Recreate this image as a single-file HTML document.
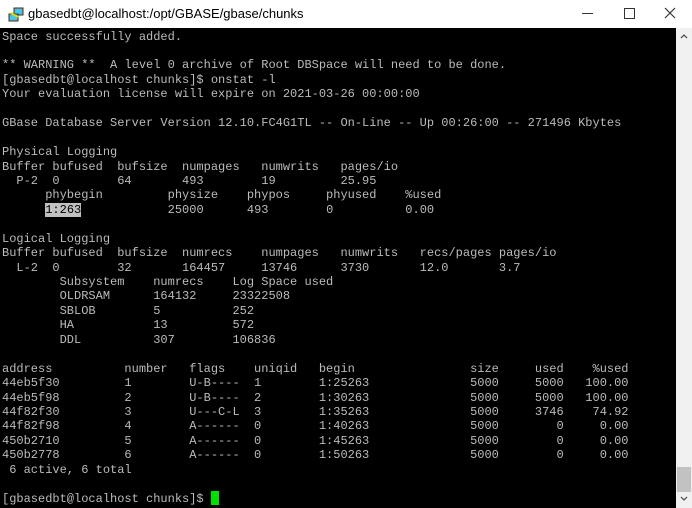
<!DOCTYPE html>
<html><head><meta charset="utf-8">
<style>
html,body{margin:0;padding:0;width:692px;height:508px;overflow:hidden;background:#fff;}
.title{position:absolute;left:0;top:0;width:692px;height:28px;background:#fff;}
.ttext{position:absolute;left:28px;top:6px;font:13px "Liberation Sans",sans-serif;color:#000;}
.term{position:absolute;left:0;top:28px;width:676px;height:480px;background:#000;}
.sb{position:absolute;left:676px;top:28px;width:16px;height:480px;background:#f0f0f0;}
pre{position:absolute;left:2px;top:29.6px;margin:0;font:12px/14.44px "Liberation Mono",monospace;color:#bbb;white-space:pre;}
.hl{background:#c0c0c0;color:#000;}
.cur{position:absolute;left:211px;top:491px;width:8px;height:14px;background:#00e000;}
</style></head><body>
<div class="title">
<svg style="position:absolute;left:8px;top:7px" width="16" height="16" viewBox="0 0 16 16">
<rect x="6" y="1" width="9" height="7" fill="#8aa" stroke="#333" stroke-width="1"/>
<rect x="7.5" y="2.5" width="6" height="4" fill="#3cf"/>
<rect x="1" y="7" width="9" height="7" fill="#8aa" stroke="#333" stroke-width="1"/>
<rect x="2.5" y="8.5" width="6" height="4" fill="#3cf"/>
<path d="M3 6 L10 10" stroke="#dd0" stroke-width="2"/>
</svg>
<div class="ttext">gbasedbt@localhost:/opt/GBASE/gbase/chunks</div>
<div style="position:absolute;left:582px;top:13px;width:11px;height:1px;background:#333"></div>
<div style="position:absolute;left:624px;top:8px;width:9px;height:9px;border:1px solid #333"></div>
<svg style="position:absolute;left:664px;top:7px" width="12" height="12" viewBox="0 0 12 12"><path d="M1 1L11 11M11 1L1 11" stroke="#333" stroke-width="1.2"/></svg>
</div>
<div class="term"></div>
<div class="sb">
<svg style="position:absolute;left:4px;top:5px" width="8" height="6" viewBox="0 0 8 6"><path d="M1 5L4 2L7 5" stroke="#555" stroke-width="1.3" fill="none"/></svg>
<div style="position:absolute;left:1px;top:439px;width:14px;height:25px;background:#c2c2c2"></div>
<svg style="position:absolute;left:4px;top:468px" width="8" height="6" viewBox="0 0 8 6"><path d="M1 1L4 4L7 1" stroke="#555" stroke-width="1.3" fill="none"/></svg>
</div>
<pre>Space successfully added.

** WARNING **  A level 0 archive of Root DBSpace will need to be done.
[gbasedbt@localhost chunks]$ onstat -l
Your evaluation license will expire on 2021-03-26 00:00:00

GBase Database Server Version 12.10.FC4G1TL -- On-Line -- Up 00:26:00 -- 271496 Kbytes

Physical Logging
Buffer bufused  bufsize  numpages   numwrits   pages/io
  P-2  0        64       493        19         25.95
      phybegin         physize    phypos     phyused    %used
      <span class="hl">1:263</span>            25000      493        0          0.00

Logical Logging
Buffer bufused  bufsize  numrecs    numpages   numwrits   recs/pages pages/io
  L-2  0        32       164457     13746      3730       12.0       3.7
        Subsystem    numrecs    Log Space used
        OLDRSAM      164132     23322508
        SBLOB        5          252
        HA           13         572
        DDL          307        106836

address          number   flags    uniqid   begin                size     used    %used
44eb5f30         1        U-B----  1        1:25263              5000     5000   100.00
44eb5f98         2        U-B----  2        1:30263              5000     5000   100.00
44f82f30         3        U---C-L  3        1:35263              5000     3746    74.92
44f82f98         4        A------  0        1:40263              5000        0     0.00
450b2710         5        A------  0        1:45263              5000        0     0.00
450b2778         6        A------  0        1:50263              5000        0     0.00
 6 active, 6 total

[gbasedbt@localhost chunks]$ </pre>
<div class="cur"></div>
</body></html>
